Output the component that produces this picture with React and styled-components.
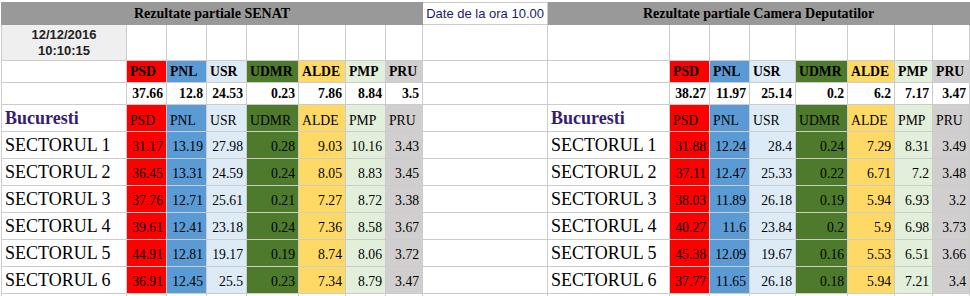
import styled, { createGlobalStyle } from "styled-components";

const GlobalStyle = createGlobalStyle`
  html, body {
    margin: 0;
    padding: 0;
    background: #fff;
    overflow: hidden;
  }
  body {
    padding: 2px 0 0 1px;
    font-family: "Liberation Serif", "Times New Roman", serif;
  }
`;

const PARTY_COLORS = {
  PSD: "#ff0000",
  PNL: "#5b9bd5",
  USR: "#ddebf7",
  UDMR: "#4e7b2b",
  ALDE: "#ffd966",
  PMP: "#e2efda",
  PRU: "#d0cece",
};

const PARTIES = Object.keys(PARTY_COLORS);

const SENAT = {
  totals: ["37.66", "12.8", "24.53", "0.23", "7.86", "8.84", "3.5"],
  sectors: [
    ["31.17", "13.19", "27.98", "0.28", "9.03", "10.16", "3.43"],
    ["36.45", "13.31", "24.59", "0.24", "8.05", "8.83", "3.45"],
    ["37.76", "12.71", "25.61", "0.21", "7.27", "8.72", "3.38"],
    ["39.61", "12.41", "23.18", "0.24", "7.36", "8.58", "3.67"],
    ["44.91", "12.81", "19.17", "0.19", "8.74", "8.06", "3.72"],
    ["36.91", "12.45", "25.5", "0.23", "7.34", "8.79", "3.47"],
  ],
};

const CAMERA = {
  totals: ["38.27", "11.97", "25.14", "0.2", "6.2", "7.17", "3.47"],
  sectors: [
    ["31.88", "12.24", "28.4", "0.24", "7.29", "8.31", "3.49"],
    ["37.11", "12.47", "25.33", "0.22", "6.71", "7.2", "3.48"],
    ["38.03", "11.89", "26.18", "0.19", "5.94", "6.93", "3.2"],
    ["40.27", "11.6", "23.84", "0.2", "5.9", "6.98", "3.73"],
    ["45.38", "12.09", "19.67", "0.16", "5.53", "6.51", "3.66"],
    ["37.77", "11.65", "26.18", "0.18", "5.94", "7.21", "3.4"],
  ],
};

const COL_WIDTHS = [
  125, 40, 40, 40, 52, 47, 40, 37,
  125,
  122, 40, 40, 46, 52, 47, 38, 37,
];

const Sheet = styled.table`
  border-collapse: collapse;
  table-layout: fixed;
  width: ${COL_WIDTHS.reduce((a, b) => a + b, 0)}px;
  border: 1px solid #cccccc;
`;

const Row = styled.tr`
  height: ${(p) => p.$h}px;
`;

const Cell = styled.td`
  border: 1px solid #cccccc;
  padding: 0 3px 2px;
  background: ${(p) => p.$bg || "#ffffff"};
  text-align: ${(p) => p.$align || "left"};
  vertical-align: bottom;
  white-space: nowrap;
  overflow: hidden;
  font-size: 13.7px;
  line-height: 17px;
  color: #000;
  font-weight: ${(p) => (p.$bold ? 700 : 400)};
`;

const TitleCell = styled.td`
  background: #999999;
  border: 1px solid #999999;
  text-align: center;
  vertical-align: middle;
  font-weight: 700;
  font-size: 14px;
  padding: 0;
  white-space: nowrap;
  overflow: hidden;
`;

const NoteCell = styled.td`
  border: 1px solid #cccccc;
  background: #ffffff;
  font-family: "Liberation Sans", Arial, sans-serif;
  font-size: 13px;
  color: #1c1a6e;
  text-align: center;
  vertical-align: middle;
  padding: 0;
  white-space: nowrap;
`;

const StampCell = styled.td`
  border: 1px solid #cccccc;
  background: #efefef;
  font-family: "Liberation Sans", Arial, sans-serif;
  font-weight: 700;
  font-size: 13px;
  line-height: 16px;
  color: #222;
  text-align: center;
  vertical-align: middle;
  padding: 0;
`;

const CityCell = styled(Cell)`
  font-size: 18px;
  line-height: 20px;
  color: #351c75;
  font-weight: 700;
  padding-bottom: 3px;
`;

const SectorCell = styled(Cell)`
  font-size: 18px;
  line-height: 20px;
  padding-bottom: 3px;
`;

const ValueCell = styled(Cell)`
  text-align: right;
  padding-bottom: 3px;
`;

const Blank = () => <Cell />;

const LabelCells = ({ bold }) =>
  PARTIES.map((p) => (
    <Cell key={p} $bg={PARTY_COLORS[p]} $bold={bold}>
      {p}
    </Cell>
  ));

const TotalCells = ({ values }) =>
  values.map((v, i) => (
    <Cell key={i} $align="right" $bold>
      {v}
    </Cell>
  ));

const ValueCells = ({ values }) =>
  values.map((v, i) => (
    <ValueCell key={i} $bg={PARTY_COLORS[PARTIES[i]]}>
      {v}
    </ValueCell>
  ));

const Blanks = ({ n }) =>
  Array.from({ length: n }, (_, i) => <Cell key={i} />);

export default function App() {
  return (
    <>
      <GlobalStyle />
      <Sheet>
        <colgroup>
          {COL_WIDTHS.map((w, i) => (
            <col key={i} style={{ width: w }} />
          ))}
        </colgroup>
        <tbody>
          <Row $h={22}>
            <TitleCell colSpan={8}>Rezultate partiale SENAT</TitleCell>
            <NoteCell>Date de la ora 10.00</NoteCell>
            <TitleCell colSpan={8}>Rezultate partiale Camera Deputatilor</TitleCell>
          </Row>
          <Row $h={36}>
            <StampCell>
              12/12/2016
              <br />
              10:10:15
            </StampCell>
            <Blanks n={16} />
          </Row>
          <Row $h={22}>
            <Blank />
            <LabelCells bold />
            <Blank />
            <Blank />
            <LabelCells bold />
          </Row>
          <Row $h={22}>
            <Blank />
            <TotalCells values={SENAT.totals} />
            <Blank />
            <Blank />
            <TotalCells values={CAMERA.totals} />
          </Row>
          <Row $h={27}>
            <CityCell>Bucuresti</CityCell>
            <LabelCells />
            <Blank />
            <CityCell>Bucuresti</CityCell>
            <LabelCells />
          </Row>
          {SENAT.sectors.map((row, i) => (
            <Row $h={27} key={i}>
              <SectorCell>SECTORUL {i + 1}</SectorCell>
              <ValueCells values={row} />
              <Blank />
              <SectorCell>SECTORUL {i + 1}</SectorCell>
              <ValueCells values={CAMERA.sectors[i]} />
            </Row>
          ))}
          <Row $h={27}>
            <Blanks n={17} />
          </Row>
        </tbody>
      </Sheet>
    </>
  );
}
